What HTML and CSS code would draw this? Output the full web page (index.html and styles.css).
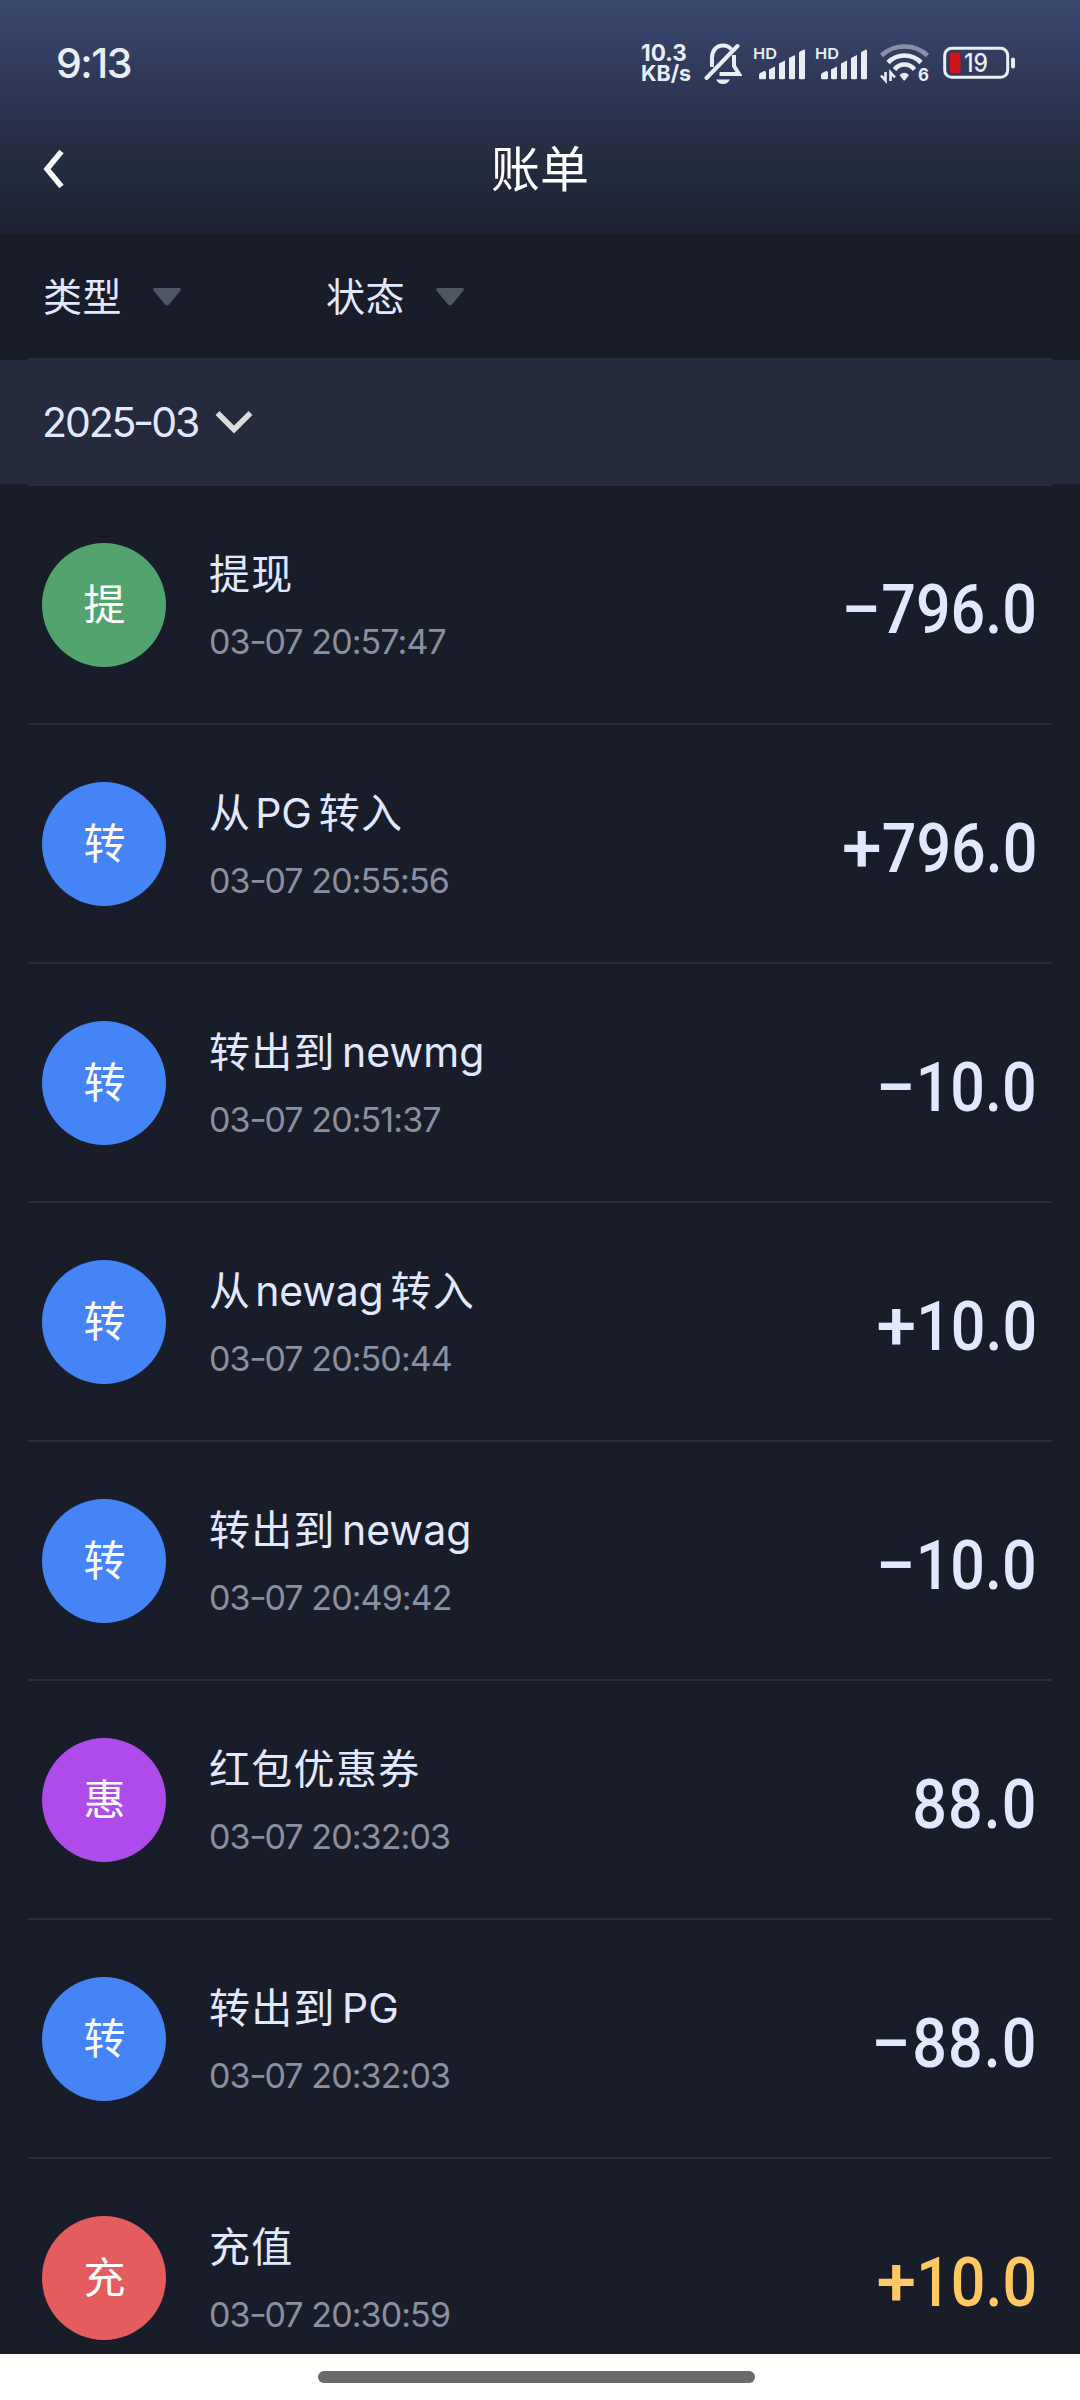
FILE: index.html
```html
<!DOCTYPE html>
<html lang="zh-CN">
<head>
<meta charset="utf-8">
<title>账单</title>
<link rel="stylesheet" href="styles.css">
</head>
<body>
<div class="screen">
  <header class="header">
    <div class="status">
      <span class="clock">9:13</span>
      <div class="speed"><span class="speed-value">10.3</span><span class="speed-unit">KB/s</span></div>
      <svg class="bell" width="38" height="42" viewBox="0 0 38 42" fill="none" stroke="#e9edf5" stroke-width="4">
        <path d="M8 25V16C8 9 12 3.500 19 3.500c3.500 0 6.500 1.500 8.500 4"/>
        <path d="M30 13v11l5 8H15.500"/>
        <path d="M2.500 36L33.500 4" stroke-linecap="round"/>
        <path d="M12 37.500h14q-2.500 4.500-7 4.500t-7-4.500z" fill="#e9edf5" stroke="none"/>
      </svg>
      <svg class="signal" width="54" height="36" viewBox="0 0 54 36">
        <text x="0" y="14" class="svg-hd" textLength="24" lengthAdjust="spacingAndGlyphs">HD</text>
        <path d="M6 33v-3q0-2 2-2.600l3-1.400q2-.5 2 1.500v5.500q0 1.200-1.200 1.200H7.200Q6 34.200 6 33zM16 24.500l6-3V33q0 1.200-1.200 1.200h-3.600Q16 34.200 16 33zM26 18.500l6-3V33q0 1.200-1.200 1.200h-3.600Q26 34.200 26 33zM36 13l6-3V33q0 1.200-1.200 1.200h-3.600Q36 34.200 36 33zM46 8q0-1 1-1.500l3.500-1.800q1.500-.5 1.500 1V33q0 1.200-1.200 1.200h-3.600Q46 34.200 46 33z"/>
      </svg>
      <svg class="signal second" width="54" height="36" viewBox="0 0 54 36">
        <text x="0" y="14" class="svg-hd" textLength="24" lengthAdjust="spacingAndGlyphs">HD</text>
        <path d="M6 33v-3q0-2 2-2.600l3-1.400q2-.5 2 1.500v5.500q0 1.200-1.200 1.200H7.200Q6 34.200 6 33zM16 24.500l6-3V33q0 1.200-1.200 1.200h-3.600Q16 34.200 16 33zM26 18.500l6-3V33q0 1.200-1.200 1.200h-3.600Q26 34.200 26 33zM36 13l6-3V33q0 1.200-1.200 1.200h-3.600Q36 34.200 36 33zM46 8q0-1 1-1.500l3.500-1.800q1.500-.5 1.500 1V33q0 1.200-1.200 1.200h-3.600Q46 34.200 46 33z"/>
      </svg>
      <svg class="wifi" width="50" height="44" viewBox="0 -2 50 44" fill="none" stroke="#e9edf5" stroke-width="4.600">
        <path d="M1.500 12.500Q11 3.500 24.500 3.500T47.500 12.500" stroke="#8590aa"/>
        <path d="M8 19.500Q15 12.500 24.500 12.500T41 19.500"/>
        <path d="M14.500 26.500Q18.500 21.500 24.500 21.500T34.500 26.500"/>
        <path d="M19.500 32q5-4.500 9.500 0l-3.800 5q-.9 1-1.900 0z" fill="#e9edf5" stroke="none"/>
        <path d="M5.500 29v8.500L1 32.500M10.500 38v-8.500l4.500 5" stroke-width="2.600"/>
        <text x="38" y="38" class="svg-six" textLength="11" lengthAdjust="spacingAndGlyphs">6</text>
      </svg>
      <svg class="battery" width="74" height="34" viewBox="0 0 74 34">
        <rect x="1.700" y="2.300" width="63" height="29" rx="7" fill="none" stroke="#e9edf5" stroke-width="3"/>
        <rect x="7" y="6.500" width="10.500" height="20.500" rx="2.500" fill="#d0151c"/>
        <rect x="68" y="11.500" width="4" height="11" rx="2" fill="#e9edf5"/>
        <text x="21" y="26" class="svg-level" textLength="24" lengthAdjust="spacingAndGlyphs">19</text>
      </svg>
    </div>
    <div class="navbar">
      <svg class="back" width="24" height="40" viewBox="0 0 24 40" fill="none" stroke="#fff" stroke-width="5.500"><path d="M20.500 2.500L6 20l14.500 17.500"/></svg>
      <h1 class="title">账单</h1>
    </div>
  </header>
  <nav class="filters">
    <div class="filter"><span>类型</span><svg width="28" height="18" viewBox="0 0 28 18"><path d="M1.500 0h25q2 .5 1 2.500L16 16.500q-2 2-4 0L.5 2.500Q-.5 .5 1.500 0z" fill="#505563"/></svg></div>
    <div class="filter"><span>状态</span><svg width="28" height="18" viewBox="0 0 28 18"><path d="M1.500 0h25q2 .5 1 2.500L16 16.500q-2 2-4 0L.5 2.500Q-.5 .5 1.500 0z" fill="#505563"/></svg></div>
  </nav>
  <div class="month"><span>2025<span class="dash">-</span>03</span><svg width="38" height="24" viewBox="0 0 38 24" fill="none" stroke="#dcdcdc" stroke-width="5.500"><path d="M2.500 3L19 19.500 35.500 3"/></svg></div>
  <ul class="list">
    <li class="row"><span class="badge green">提</span><div class="info"><p class="name">提现</p><p class="time">03<span class="dash">-</span>07 20:57:47</p></div><span class="amount"><span class="sign">−</span>796.0</span></li>
    <li class="row"><span class="badge blue">转</span><div class="info"><p class="name">从<span class="latin">PG</span>转入</p><p class="time">03<span class="dash">-</span>07 20:55:56</p></div><span class="amount"><span class="sign">+</span>796.0</span></li>
    <li class="row"><span class="badge blue">转</span><div class="info"><p class="name">转出到<span class="latin wide">newmg</span></p><p class="time">03<span class="dash">-</span>07 20:51:37</p></div><span class="amount"><span class="sign">−</span>10.0</span></li>
    <li class="row"><span class="badge blue">转</span><div class="info"><p class="name">从<span class="latin">newag</span>转入</p><p class="time">03<span class="dash">-</span>07 20:50:44</p></div><span class="amount"><span class="sign">+</span>10.0</span></li>
    <li class="row"><span class="badge blue">转</span><div class="info"><p class="name">转出到<span class="latin wide">newag</span></p><p class="time">03<span class="dash">-</span>07 20:49:42</p></div><span class="amount"><span class="sign">−</span>10.0</span></li>
    <li class="row"><span class="badge purple">惠</span><div class="info"><p class="name">红包优惠券</p><p class="time">03<span class="dash">-</span>07 20:32:03</p></div><span class="amount loose">88.0</span></li>
    <li class="row"><span class="badge blue">转</span><div class="info"><p class="name">转出到<span class="latin wide">PG</span></p><p class="time">03<span class="dash">-</span>07 20:32:03</p></div><span class="amount loose"><span class="sign">−</span>88.0</span></li>
    <li class="row"><span class="badge red">充</span><div class="info"><p class="name">充值</p><p class="time">03<span class="dash">-</span>07 20:30:59</p></div><span class="amount gold"><span class="sign">+</span>10.0</span></li>
  </ul>
  <footer class="homebar"><span class="pill"></span></footer>
</div>
</body>
</html>
```
FILE: styles.css
```css
* { box-sizing: border-box; margin: 0; padding: 0; }
body { font-family: Inter, "Noto Sans CJK SC", sans-serif; background: #181d29; }
.screen { width: 1080px; height: 2400px; display: flex; flex-direction: column; overflow: hidden; background: #181d29; color: #e2e8ff; }

.header { height: 234px; flex: none; background: linear-gradient(#394a6c 0, #36436a 30px, #2f3857 80px, #293047 130px, #222a3d 180px, #1d2133 234px); }
.status { height: 104px; padding: 21px 0 0 56px; display: flex; align-items: center; color: #e9edf5; }
.status svg { display: block; flex: none; fill: #e9edf5; }
.status svg.bell, .status svg.wifi { fill: none; }
.clock { width: 585px; font-size: 41px; font-weight: 500; letter-spacing: -1.5px; }
.speed { width: 63px; display: flex; flex-direction: column; font-weight: 700; font-size: 21.5px; line-height: 21px; }
.speed-value { font-size: 22.5px; }
.signal { margin-left: 11px; }
.second { margin-left: 8px; }
.wifi { margin-left: 11px; }
.battery { margin-left: 13px; }
.svg-hd { font: 600 15px Inter, sans-serif; }
.svg-six { font: 700 18px Inter, sans-serif; fill: #e9edf5; stroke: none; }
.svg-level { font: 500 25px Inter, sans-serif; }

.navbar { height: 130px; display: grid; grid-template-columns: 42px 1fr 42px; align-items: center; }
.back { margin-left: 41px; }
.title { text-align: center; font-size: 49px; font-weight: 400; line-height: 60px; padding-top: 1px; color: #fff; }

.filters { height: 126px; flex: none; margin: 0 28px; padding-left: 15px; display: flex; border-bottom: 2px solid #2a2e3b; }
.filter { width: 283px; display: flex; align-items: center; gap: 31px; font-size: 39px; letter-spacing: 0.5px; }
.filter span { padding-bottom: 5px; }
.filter svg { margin-top: 2px; }

.month { height: 124px; flex: none; padding-left: 42px; display: flex; align-items: center; gap: 17px; background: #252a3d; font-size: 41px; letter-spacing: -2.1px; }
.dash { display: inline-block; transform: translateY(-1px) scaleX(1.15); }

.list { flex: 1; min-height: 0; overflow: hidden; padding: 0 28px; list-style: none; }
.row { height: 239px; display: flex; align-items: center; padding: 0 14px; border-top: 2px solid #2a2e39; }
.badge { width: 124px; height: 124px; flex: none; border-radius: 50%; display: flex; align-items: center; justify-content: center; padding: 0 0 6px 1px; font-size: 42px; color: #fff; }
.green { background: #53a36e; }
.blue { background: #4584f6; }
.purple { background: #ae4bea; }
.red { background: #e45c5d; }
.info { flex: 1; margin-left: 43px; padding-top: 6px; display: flex; flex-direction: column; gap: 8px; }
.name { font-size: 41px; line-height: 60px; letter-spacing: 1.3px; white-space: nowrap; }
.latin { margin: 0 7px 0 4px; letter-spacing: -0.2px; }
.wide { margin-left: 6px; letter-spacing: 0.1px; }
.time { font-size: 34px; line-height: 60px; letter-spacing: -0.9px; color: #8a8fa2; }
.amount { font: 500 69px/80px Roboto, sans-serif; transform: scaleX(0.885); transform-origin: right; padding: 11px 1px 0 0; }
.sign { display: inline-block; transform: scaleX(1.17); transform-origin: right; }
.loose { letter-spacing: 1.2px; padding-right: 0; }
.gold { color: #fec963; }

.homebar { height: 46px; flex: none; background: #fff; display: flex; padding: 17px 0 0 318px; }
.pill { width: 437px; height: 12px; border-radius: 6px; background: #6a6a6a; }
```
